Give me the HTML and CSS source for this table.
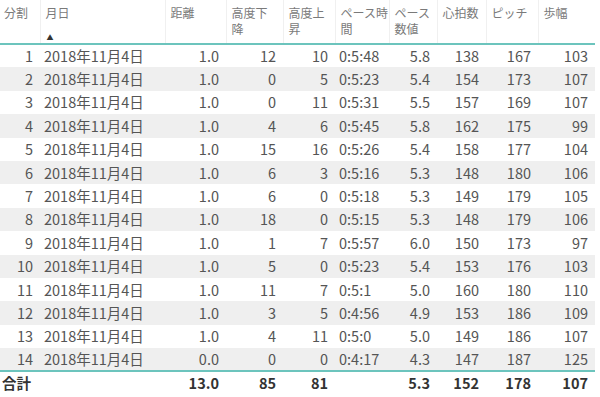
FILE: index.html
```html
<!DOCTYPE html>
<html lang="ja">
<head>
  <meta charset="UTF-8" />
  <title>ラップ一覧</title>
  <link rel="stylesheet" href="styles.css">
</head>
<body>
  <table class="laps">
    <colgroup>
      <col class="c-no"><col class="c-date"><col class="c-dist"><col class="c-down"><col class="c-up">
      <col class="c-time"><col class="c-pace"><col class="c-hr"><col class="c-pitch"><col class="c-stride">
    </colgroup>
    <thead>
      <tr>
        <th>分割</th>
        <th class="sorted">月日<span class="sort">&#9650;</span></th>
        <th>距離</th>
        <th>高度下<br>降</th>
        <th>高度上<br>昇</th>
        <th>ペース時<br>間</th>
        <th>ペース<br>数値</th>
        <th>心拍数</th>
        <th>ピッチ</th>
        <th>歩幅</th>
      </tr>
    </thead>
    <tbody id="rows"></tbody>
    <tfoot>
      <tr>
        <td class="label">合計</td>
        <td></td>
        <td class="num">13.0</td>
        <td class="num">85</td>
        <td class="num">81</td>
        <td></td>
        <td class="num">5.3</td>
        <td class="num">152</td>
        <td class="num">178</td>
        <td class="num">107</td>
      </tr>
    </tfoot>
  </table>
  <script>
    const laps = [
      ['1.0', 12, 10, '0:5:48', '5.8', 138, 167, 103],
      ['1.0', 0, 5, '0:5:23', '5.4', 154, 173, 107],
      ['1.0', 0, 11, '0:5:31', '5.5', 157, 169, 107],
      ['1.0', 4, 6, '0:5:45', '5.8', 162, 175, 99],
      ['1.0', 15, 16, '0:5:26', '5.4', 158, 177, 104],
      ['1.0', 6, 3, '0:5:16', '5.3', 148, 180, 106],
      ['1.0', 6, 0, '0:5:18', '5.3', 149, 179, 105],
      ['1.0', 18, 0, '0:5:15', '5.3', 148, 179, 106],
      ['1.0', 1, 7, '0:5:57', '6.0', 150, 173, 97],
      ['1.0', 5, 0, '0:5:23', '5.4', 153, 176, 103],
      ['1.0', 11, 7, '0:5:1', '5.0', 160, 180, 110],
      ['1.0', 3, 5, '0:4:56', '4.9', 153, 186, 109],
      ['1.0', 4, 11, '0:5:0', '5.0', 149, 186, 107],
      ['0.0', 0, 0, '0:4:17', '4.3', 147, 187, 125]
    ];
    const tbody = document.getElementById('rows');
    laps.forEach(function(l, i) {
      const tr = document.createElement('tr');
      tr.innerHTML =
        '<td class="num">' + (i + 1) + '</td>' +
        '<td>2018年11月4日</td>' +
        '<td class="num">' + l[0] + '</td>' +
        '<td class="num">' + l[1] + '</td>' +
        '<td class="num">' + l[2] + '</td>' +
        '<td>' + l[3] + '</td>' +
        '<td class="num">' + l[4] + '</td>' +
        '<td class="num">' + l[5] + '</td>' +
        '<td class="num">' + l[6] + '</td>' +
        '<td class="num">' + l[7] + '</td>';
      tbody.appendChild(tr);
    });
  </script>
</body>
</html>
```
FILE: styles.css
```css
* { margin: 0; padding: 0; box-sizing: border-box; }
body {
  background: #ffffff;
  font-family: "Noto Sans CJK JP", "Noto Sans", sans-serif;
  color: #555555;
}
table.laps {
  width: 595px; table-layout: fixed; border-collapse: collapse;
}
.c-no { width: 40px; }
.c-date { width: 125px; }
.c-dist { width: 61px; }
.c-down { width: 57px; }
.c-up { width: 52px; }
.c-time { width: 54px; }
.c-pace { width: 48px; }
.c-hr { width: 49px; }
.c-pitch { width: 52px; }
.c-stride { width: 57px; }

thead th {
  height: 44px; padding: 5px 0 0 5px; vertical-align: top; text-align: left;
  font-weight: normal; font-size: 12px; line-height: 16px; color: #7a7a7a;
  white-space: nowrap; overflow: hidden;
  border-left: 1px solid #f0f0f0; border-bottom: 2px solid #6cc4bd;
  position: relative;
}
thead th:first-child { border-left: none; padding-left: 4px; }
.sort {
  position: absolute; left: 6px; bottom: 2px; font-size: 7px; line-height: 8px; color: #333;
}
tbody td {
  height: 23.4px; padding: 0 7px 0 4px; font-size: 14.5px; line-height: 18px;
  white-space: nowrap; overflow: hidden;
}
tbody tr:nth-child(even) td { background: #efefef; }
td.num { text-align: right; }
tfoot td {
  height: 23px; padding: 0 7px 0 4px; font-size: 14.5px; line-height: 18px; font-weight: bold;
  color: #333; border-top: 2px solid #6cc4bd;
}
tfoot td.label { padding-left: 2px; }
```
